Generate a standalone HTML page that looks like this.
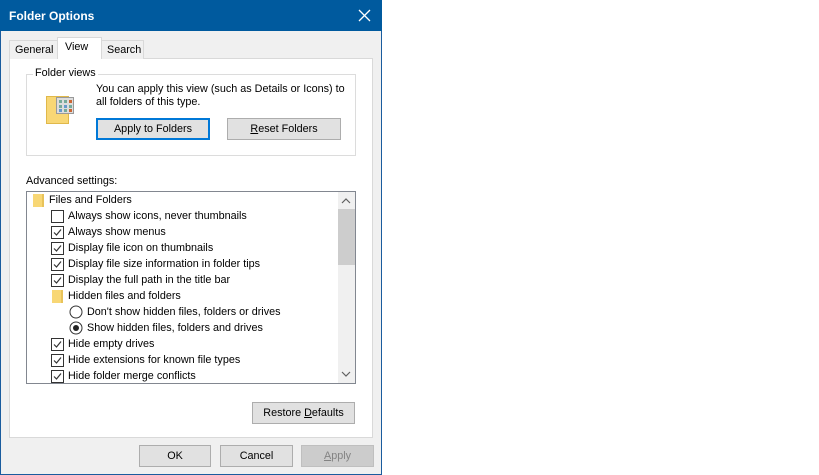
<!DOCTYPE html><html><head><style>
*{margin:0;padding:0;box-sizing:border-box}
body{width:819px;height:475px;background:#fff;font-family:"Liberation Sans",sans-serif;font-size:10.8px;color:#000;position:relative;overflow:hidden}
.a{position:absolute}
.win{left:0;top:0;width:382px;height:475px;background:#f0f0f0;border:1px solid #1a5c9e;border-top:none}
.title{left:0;top:0;width:382px;height:31px;background:#005a9e;color:#fff;font-size:12px;font-weight:bold}
.btn{position:absolute;background:#e1e1e1;border:1px solid #adadad;text-align:center;line-height:21px}
.cb{position:absolute;width:13px;height:13px;border:1px solid #333;background:#fff}
.row{position:absolute;height:16px;line-height:16px;white-space:nowrap}
.fold{position:absolute;width:11px;height:13px;background:#f8d775;border-right:2px solid #e8c35a}
</style></head><body>
<div class="a win"></div>
<div class="a title"><span class="a" style="left:9px;top:9px">Folder Options</span>
<svg class="a" style="left:358px;top:9px" width="13" height="13"><path d="M1 1L12 12M12 1L1 12" stroke="#fff" stroke-width="1.3"/></svg></div>
<div class="a" style="left:9px;top:58px;width:364px;height:380px;background:#fff;border:1px solid #d9d9d9"></div>
<div class="a" style="left:9px;top:40px;width:49px;height:19px;border:1px solid #d9d9d9;border-bottom:none;background:#f0f0f0;padding:3px 0 0 5px">General</div>
<div class="a" style="left:101px;top:40px;width:43px;height:19px;border:1px solid #d9d9d9;border-bottom:none;background:#f0f0f0;padding:3px 0 0 5px">Search</div>
<div class="a" style="left:57px;top:37px;width:45px;height:22px;border:1px solid #d9d9d9;border-bottom:none;background:#fff;padding:3px 0 0 7px">View</div>
<div class="a" style="left:26px;top:74px;width:330px;height:82px;border:1px solid #dcdcdc"></div>
<div class="a" style="left:33px;top:67px;background:#fff;padding:0 2px">Folder views</div>
<div class="a" style="left:46px;top:96px;width:23px;height:28px;background:#f8d775;border:1px solid #e0b84a"></div>
<svg class="a" style="left:56px;top:97px" width="18" height="17"><rect x=".5" y=".5" width="17" height="16" fill="#ddd" stroke="#999"/><g fill="#7a9"><rect x="3" y="3" width="3" height="3"/><rect x="8" y="3" width="3" height="3"/><rect x="13" y="3" width="3" height="3" fill="#c63"/><rect x="3" y="8" width="3" height="3"/><rect x="8" y="8" width="3" height="3" fill="#69c"/><rect x="13" y="8" width="3" height="3"/><rect x="3" y="12" width="3" height="3" fill="#69c"/><rect x="8" y="12" width="3" height="3"/><rect x="13" y="12" width="3" height="3" fill="#c63"/></g></svg>
<div class="a" style="left:96px;top:83px;line-height:13px">You can apply this view (such as Details or Icons) to<br>all folders of this type.</div>
<div class="btn" style="left:96px;top:118px;width:114px;height:22px;border:2px solid #0078d7;line-height:19px">Apply to Folders</div>
<div class="btn" style="left:227px;top:118px;width:114px;height:22px"><u>R</u>eset Folders</div>
<div class="a" style="left:26px;top:175px">Advanced settings:</div>
<div class="a" style="left:26px;top:191px;width:330px;height:193px;border:1px solid #828790;background:#fff"></div>
<div class="a" style="left:338px;top:192px;width:17px;height:191px;background:#f0f0f0"></div>
<div class="a" style="left:338px;top:209px;width:17px;height:56px;background:#cdcdcd"></div>
<svg class="a" style="left:341px;top:197px" width="10" height="8"><path d="M1 6L5 2L9 6" fill="none" stroke="#606060" stroke-width="1.2"/></svg>
<svg class="a" style="left:341px;top:370px" width="10" height="8"><path d="M1 2L5 6L9 2" fill="none" stroke="#606060" stroke-width="1.2"/></svg>
<div class="fold" style="left:33px;top:194px"></div><div class="row" style="left:49px;top:192px">Files and Folders</div>
<div class="fold" style="left:52px;top:290px"></div><div class="row" style="left:68px;top:288px">Hidden files and folders</div>
<div class="cb" style="left:51px;top:210px"></div><div class="row" style="left:68px;top:208px">Always show icons, never thumbnails</div>
<div class="cb" style="left:51px;top:226px"></div><div class="row" style="left:68px;top:224px">Always show menus</div>
<div class="cb" style="left:51px;top:242px"></div><div class="row" style="left:68px;top:240px">Display file icon on thumbnails</div>
<div class="cb" style="left:51px;top:258px"></div><div class="row" style="left:68px;top:256px">Display file size information in folder tips</div>
<div class="cb" style="left:51px;top:274px"></div><div class="row" style="left:68px;top:272px">Display the full path in the title bar</div>
<div class="cb" style="left:51px;top:338px"></div><div class="row" style="left:68px;top:336px">Hide empty drives</div>
<div class="cb" style="left:51px;top:354px"></div><div class="row" style="left:68px;top:352px">Hide extensions for known file types</div>
<div class="cb" style="left:51px;top:370px"></div><div class="row" style="left:68px;top:368px">Hide folder merge conflicts</div>
<svg class="a" style="left:51px;top:226px" width="13" height="160"><g fill="none" stroke="#333" stroke-width="1.2"><path d="M3 6.5L5.5 9L10 3.5"/><path transform="translate(0,16)" d="M3 6.5L5.5 9L10 3.5"/><path transform="translate(0,32)" d="M3 6.5L5.5 9L10 3.5"/><path transform="translate(0,48)" d="M3 6.5L5.5 9L10 3.5"/><path transform="translate(0,112)" d="M3 6.5L5.5 9L10 3.5"/><path transform="translate(0,128)" d="M3 6.5L5.5 9L10 3.5"/><path transform="translate(0,144)" d="M3 6.5L5.5 9L10 3.5"/></g></svg>
<svg class="a" style="left:69px;top:305px" width="14" height="30"><circle cx="7" cy="7" r="6" fill="#fff" stroke="#333"/><circle cx="7" cy="23" r="6" fill="#fff" stroke="#333"/><circle cx="7" cy="23" r="3" fill="#222"/></svg>
<div class="row" style="left:87px;top:304px">Don't show hidden files, folders or drives</div>
<div class="row" style="left:87px;top:320px">Show hidden files, folders and drives</div>
<div class="btn" style="left:252px;top:402px;width:103px;height:22px">Restore <u>D</u>efaults</div>
<div class="btn" style="left:139px;top:445px;width:72px;height:22px">OK</div>
<div class="btn" style="left:220px;top:445px;width:73px;height:22px">Cancel</div>
<div class="btn" style="left:301px;top:445px;width:73px;height:22px;background:#ccc;border-color:#bfbfbf;color:#838383"><u>A</u>pply</div>
</body></html>
